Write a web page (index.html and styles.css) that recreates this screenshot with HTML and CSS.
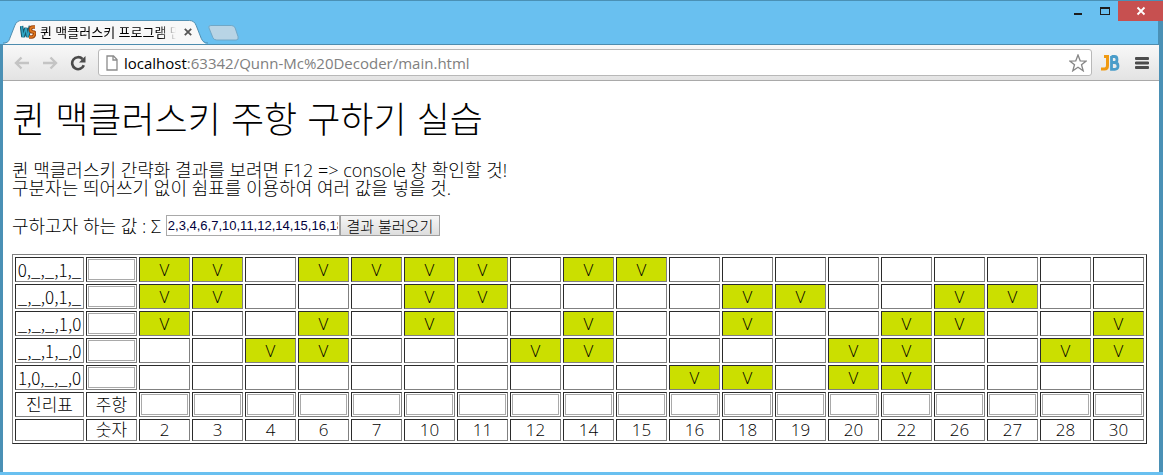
FILE: index.html
```html
<!DOCTYPE html>
<html lang="ko">
<head>
<meta charset="utf-8">
<title>퀸 맥클러스키 프로그램 만들기</title>
<link rel="stylesheet" href="styles.css">
</head>
<body>
<div class="window">
  <header class="titlebar">
    <div class="tabs">
      <div class="tab">
        <svg class="tab-shape" viewBox="0 0 210 25" preserveAspectRatio="none" aria-hidden="true"><path d="M0 25C5 24 6 22 7 19L12 6Q14 .5 19 .5H191Q196 .5 198 6L203 19Q205 25 210 25Z" fill="#f8f8f8"/><path d="M0 24C5 24 6 22 7 19L12 6Q14 .5 19 .5H191Q196 .5 198 6L203 19Q205 24 210 24" fill="none" stroke="#4d8cae"/></svg>
        <svg class="favicon" viewBox="0 0 16 14" aria-hidden="true"><path d="M1.500 1L3 12L6 3L7.500 12L10.500 1" fill="none" stroke="#155a70" stroke-width="3.600"/><path d="M1.500 1L3 12L6 3L7.500 12L10.500 1" fill="none" stroke="#2fa6c4" stroke-width="1.500"/><path d="M15 2H13Q10.500 2 10.500 4.500T13 7T14.500 9.500T12 12H9" fill="none" stroke="#9c4710" stroke-width="3.600"/><path d="M15 2H13Q10.500 2 10.500 4.500T13 7T14.500 9.500T12 12H9" fill="none" stroke="#e27a1e" stroke-width="1.400"/></svg>
        <span class="tab-title">퀸 맥클러스키 프로그램 만들기</span>
        <button class="tab-close" aria-label="탭 닫기"><svg viewBox="0 0 8 8"><path d="M.8.8L7.200 7.200M7.200.8L.8 7.200" stroke="#555" stroke-width="1.800"/></svg></button>
      </div>
      <button class="new-tab" aria-label="새 탭"><svg viewBox="0 0 32 16"><path d="M3 .5H24Q27 .5 28 3L31 12Q32 15.500 29 15.500H9Q6 15.500 5 13L1 3Q0 .5 3 .5Z" fill="#b8d4e5" stroke="#6fa5c4"/></svg></button>
    </div>
    <div class="controls">
      <button class="control minimize" aria-label="최소화"><svg viewBox="0 0 10 10"><path d="M1 7H9V9H1Z" fill="#1d1d1d"/></svg></button>
      <button class="control maximize" aria-label="최대화"><svg viewBox="0 0 10 10"><path d="M0 1H10V9H0ZM1 3V8H9V3Z" fill="#1d1d1d" fill-rule="evenodd"/></svg></button>
      <button class="control close" aria-label="닫기"><svg viewBox="0 0 10 10"><path d="M1.500 1.500L8.500 8.500M8.500 1.500L1.500 8.500" stroke="#fff" stroke-width="1.800"/></svg></button>
    </div>
  </header>
  <div class="frame">
    <nav class="toolbar">
      <button class="tool back" aria-label="뒤로"><svg viewBox="0 0 16 16"><path d="M15 8H2M7.500 2.500L2 8L7.500 13.500" fill="none" stroke="#c4c4c4" stroke-width="2.400"/></svg></button>
      <button class="tool forward" aria-label="앞으로"><svg viewBox="0 0 16 16"><path d="M1 8H14M8.500 2.500L14 8L8.500 13.500" fill="none" stroke="#c4c4c4" stroke-width="2.400"/></svg></button>
      <button class="tool reload" aria-label="새로고침"><svg viewBox="0 0 16 16"><path d="M12.500 4A6 6 0 1 0 13.800 10.300" fill="none" stroke="#4b4b4b" stroke-width="2.600"/><path d="M15.500 1V7.500H9Z" fill="#4b4b4b"/></svg></button>
      <div class="address">
        <svg class="page-icon" viewBox="0 0 12 16" aria-hidden="true"><path d="M1 1H7.500L11 4.500V15H1ZM7 1V5H11" fill="#fff" stroke="#8c8c8c" stroke-width="1.300"/></svg>
        <a class="url" href="#"><span class="host">localhost</span>:63342/Qunn-Mc%20Decoder/main.html</a>
        <button class="star" aria-label="북마크"><svg viewBox="0 0 18 18"><path d="M9 1L11.200 6.800L17.200 7L12.500 10.800L14.200 16.800L9 13.300L3.800 16.800L5.500 10.800L.8 7L6.800 6.800Z" fill="#fff" stroke="#868686" stroke-width="1.300"/></svg></button>
      </div>
      <button class="extension" aria-label="JetBrains"><svg viewBox="0 0 19 16"><path d="M3 1.500H6.500V10.500Q6.500 14 3.500 14H0" fill="none" stroke="#f09a12" stroke-width="3"/><path d="M10.500 1.500H13.500Q16 1.500 16 4.500T13.500 7.500H10.500M13.500 7.500Q17 7.500 17 11T13.500 14.300H10.500V1" fill="none" stroke="#4b9dc9" stroke-width="2.800"/></svg></button>
      <button class="menu" aria-label="메뉴"><svg viewBox="0 0 14 14"><path d="M1 2.500H13M1 7H13M1 11.500H13" stroke="#4c4c4c" stroke-width="2.800" stroke-linecap="round"/></svg></button>
    </nav>
    <main class="page">
      <h1>퀸 맥클러스키 주항 구하기 실습</h1>
      <p>퀸 맥클러스키 간략화 결과를 보려면 F12 =&gt; console 창 확인할 것!<br>구분자는 띄어쓰기 없이 쉼표를 이용하여 여러 값을 넣을 것.</p>
      <form class="query">
        <label for="values">구하고자 하는 값 : Σ</label>
        <input class="values" id="values" type="text" value="2,3,4,6,7,10,11,12,14,15,16,18,19,20,22,26,27,28,30">
        <button class="load" type="button">결과 불러오기</button>
      </form>
      <table class="chart">
        <colgroup><col class="term"><col class="num" span="20"></colgroup>
        <tbody>
        <tr><td class="code">0,_,_,1,_</td><td><input aria-label="주항 1"></td><td class="on">V</td><td class="on">V</td><td></td><td class="on">V</td><td class="on">V</td><td class="on">V</td><td class="on">V</td><td></td><td class="on">V</td><td class="on">V</td><td></td><td></td><td></td><td></td><td></td><td></td><td></td><td></td><td></td></tr>
        <tr><td class="code">_,_,0,1,_</td><td><input aria-label="주항 2"></td><td class="on">V</td><td class="on">V</td><td></td><td></td><td></td><td class="on">V</td><td class="on">V</td><td></td><td></td><td></td><td></td><td class="on">V</td><td class="on">V</td><td></td><td></td><td class="on">V</td><td class="on">V</td><td></td><td></td></tr>
        <tr><td class="code">_,_,_,1,0</td><td><input aria-label="주항 3"></td><td class="on">V</td><td></td><td></td><td class="on">V</td><td></td><td class="on">V</td><td></td><td></td><td class="on">V</td><td></td><td></td><td class="on">V</td><td></td><td></td><td class="on">V</td><td class="on">V</td><td></td><td></td><td class="on">V</td></tr>
        <tr><td class="code">_,_,1,_,0</td><td><input aria-label="주항 4"></td><td></td><td></td><td class="on">V</td><td class="on">V</td><td></td><td></td><td></td><td class="on">V</td><td class="on">V</td><td></td><td></td><td></td><td></td><td class="on">V</td><td class="on">V</td><td></td><td></td><td class="on">V</td><td class="on">V</td></tr>
        <tr><td class="code">1,0,_,_,0</td><td><input aria-label="주항 5"></td><td></td><td></td><td></td><td></td><td></td><td></td><td></td><td></td><td></td><td></td><td class="on">V</td><td class="on">V</td><td></td><td class="on">V</td><td class="on">V</td><td></td><td></td><td></td><td></td></tr>
        <tr><td>진리표</td><td>주항</td><td><input aria-label="2"></td><td><input aria-label="3"></td><td><input aria-label="4"></td><td><input aria-label="6"></td><td><input aria-label="7"></td><td><input aria-label="10"></td><td><input aria-label="11"></td><td><input aria-label="12"></td><td><input aria-label="14"></td><td><input aria-label="15"></td><td><input aria-label="16"></td><td><input aria-label="18"></td><td><input aria-label="19"></td><td><input aria-label="20"></td><td><input aria-label="22"></td><td><input aria-label="26"></td><td><input aria-label="27"></td><td><input aria-label="28"></td><td><input aria-label="30"></td></tr>
        <tr class="numbers"><td></td><td>숫자</td><td>2</td><td>3</td><td>4</td><td>6</td><td>7</td><td>10</td><td>11</td><td>12</td><td>14</td><td>15</td><td>16</td><td>18</td><td>19</td><td>20</td><td>22</td><td>26</td><td>27</td><td>28</td><td>30</td></tr>
        </tbody>
      </table>
    </main>
  </div>
</div>
</body>
</html>
```
FILE: styles.css
```css
* { box-sizing: border-box; }
body { margin: 0; background: #69c0f0; color: #000; font-family: "Open Sans", "Noto Sans CJK KR", sans-serif; font-weight: 300; font-size: 17px; line-height: 18px; }
button { padding: 0; border: 0; background: none; font: inherit; color: inherit; }
svg { display: block; }

.window { display: flex; flex-direction: column; min-height: 100vh; border-top: 1px solid #4a90b5; padding-bottom: 3px; }
.titlebar { display: flex; justify-content: space-between; height: 43px; background: linear-gradient(#4a90b5, #4a90b5) right / 5px 100% no-repeat; }
.tabs { display: flex; align-items: flex-end; padding-left: 3px; }
.tab { position: relative; display: flex; align-items: center; width: 205px; height: 24px; padding: 0 16px 0 17px; }
.tab-shape { position: absolute; inset: 0; width: 100%; height: 100%; }
.favicon { position: relative; width: 16px; height: 14px; margin-right: 4px; }
.tab-title { position: relative; flex: 1; overflow: hidden; white-space: nowrap; font-size: 13px; font-weight: 400; -webkit-mask-image: linear-gradient(to right, #000 88%, transparent); mask-image: linear-gradient(to right, #000 88%, transparent); }
.tab-close { position: relative; width: 8px; margin: 0 0 0 8px; }
.new-tab { width: 31px; height: 16px; margin-bottom: 3px; }
.controls { display: flex; height: 20px; }
.control { display: flex; align-items: center; justify-content: center; width: 27px; }
.control svg { width: 10px; height: 10px; }
.close { width: 45px; background: #c75050; }

.frame { flex: 1; display: flex; flex-direction: column; border: solid #4a90b5; border-width: 0 4px 0 3px; background: #fff; }
.toolbar { display: flex; align-items: center; height: 37px; padding: 0 10px 0 11px; border-top: 1px solid #4d8cae; border-bottom: 1px solid #a9a9a9; background: linear-gradient(#f8f8f8, #e3e3e3); }
.tool { width: 16px; margin-right: 12px; }
.address { flex: 1; display: flex; align-items: center; height: 27px; padding: 0 4px 0 7px; border: 1px solid #b8b8b8; border-radius: 3px; background: #fff; }
.page-icon { width: 12px; height: 16px; margin-right: 6px; }
.url { flex: 1; color: #808080; text-decoration: none; font-weight: 400; font-size: 15px; }
.host { color: #000; }
.star { width: 18px; }
.extension { width: 19px; margin: 0 15px 0 9px; }
.menu { width: 14px; }

.page { padding: 17px 9px 28px; }
h1 { margin: 0 0 25px; font-family: "Noto Sans CJK KR", sans-serif; font-size: 36px; line-height: 38px; font-weight: 300; }
p { margin: 0 0 18px; font-size: 18px; }
.query { display: flex; align-items: center; margin-bottom: 18px; font-size: 18px; }
.values { width: 174px; height: 21px; margin-left: 5px; padding: 0 1px; border: 1px solid #a9a9a9; font: 13px "Liberation Sans", sans-serif; color: #00003c; }
.load { width: 100px; height: 21px; border: 1px solid #a0a0a0; background: linear-gradient(#f6f6f6, #dddddd); font-size: 15px; }
.chart { table-layout: fixed; width: 1135px; max-width: 100%; border: 1px solid; border-color: #808080 #2b2b2b #2b2b2b #808080; border-spacing: 2px; }
.term { width: 69px; }
.chart td { height: 25px; padding: 1px; border: 1px solid; border-color: #2b2b2b #808080 #808080 #2b2b2b; text-align: center; white-space: nowrap; }
.chart .numbers td { height: 22px; }
.chart .code { font-family: "Noto Sans CJK KR", sans-serif; }
.chart .on { background: #cbdf00; }
.chart input { display: block; width: 100%; height: 21px; padding: 0; border: 1px solid #a9a9a9; background: #fff; }
```
